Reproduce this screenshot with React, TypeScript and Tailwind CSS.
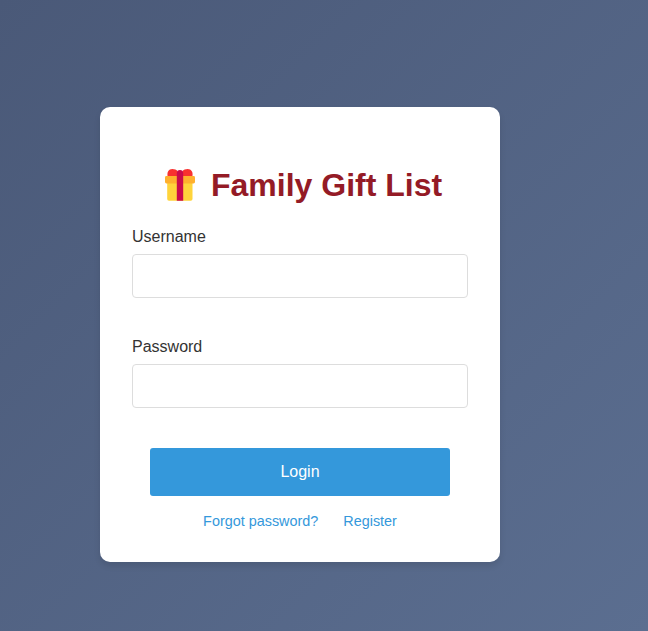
import React from "react";

function GiftIcon() {
  return (
    <svg width="30" height="34" viewBox="0 0 30 34" className="block shrink-0" aria-hidden="true">
      <path d="M2.2 14H27.5V31Q27.5 32.8 25.7 32.8H4Q2.2 32.8 2.2 31Z" fill="#ffd43b" />
      <path d="M2.8 9C1.4 4.2 3.8 1 7.3 1C9.6 1 11.4 1.8 12.8 3.4V9Z" fill="#f8312f" />
      <path d="M27.2 9C28.6 4.2 26.2 1 22.7 1C20.4 1 18.6 1.8 17.2 3.4V9Z" fill="#f8312f" />
      <rect x="0" y="8" width="30" height="7.5" rx="1.4" fill="#ffb02e" />
      <path d="M11.8 32.8V5.4Q11.8 2 15 2Q18.2 2 18.2 5.4V32.8Z" fill="#ca0b4a" />
    </svg>
  );
}

function Field({ id, label, type }: { id: string; label: string; type: string }) {
  return (
    <div className="flex flex-col">
      <label htmlFor={id} className="mb-2 leading-[18px] text-[#333333]">
        {label}
      </label>
      <input
        id={id}
        type={type}
        className="h-11 w-full rounded border border-[#dddddd] bg-white px-3 outline-none"
      />
    </div>
  );
}

export default function App() {
  return (
    <main className="flex h-[631px] w-full items-start bg-[linear-gradient(135deg,#4a5978_0%,#5b6e90_100%)] pt-[107px] pl-[100px] font-['Liberation_Sans',Arial,sans-serif] text-base">
      <section className="flex h-[455px] w-[400px] flex-col rounded-[10px] bg-white px-8 pt-[60px] shadow-[0_4px_6px_rgba(0,0,0,0.1)]">
        <h1 className="flex h-9 items-center gap-4 pl-[33px] text-[32px] leading-9 font-bold whitespace-nowrap text-[#941b26]">
          <GiftIcon />
          <span>Family Gift List</span>
        </h1>
        <form className="mt-[25px] flex flex-col" onSubmit={(e) => e.preventDefault()}>
          <div className="flex flex-col gap-10">
            <Field id="username" label="Username" type="text" />
            <Field id="password" label="Password" type="password" />
          </div>
          <button
            type="submit"
            className="mt-10 h-12 w-[300px] self-center rounded-[3px] bg-[#3498db] text-white"
          >
            Login
          </button>
        </form>
        <nav className="mt-[17px] flex justify-center gap-[25px] text-[14.4px] leading-4 text-[#3498db]">
          <a href="#">Forgot password?</a>
          <a href="#">Register</a>
        </nav>
      </section>
    </main>
  );
}
